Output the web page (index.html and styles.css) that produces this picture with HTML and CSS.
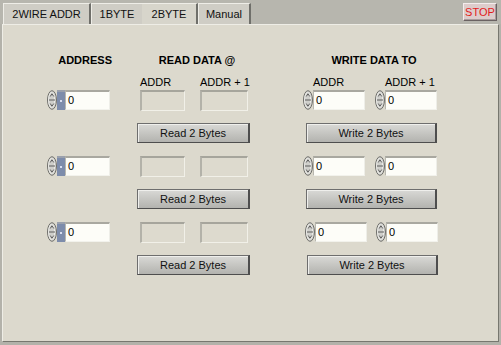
FILE: index.html
```html
<!DOCTYPE html>
<html>
<head>
<meta charset="utf-8">
<link rel="stylesheet" href="styles.css">
</head>
<body>
<div class="window">
  <div class="topbar">
    <div class="tabs">
      <div class="tab tab-wire">2WIRE ADDR</div>
      <div class="tab tab-b1">1BYTE</div>
      <div class="tab tab-b2">2BYTE</div>
      <div class="tab tab-man">Manual</div>
    </div>
    <div class="stop">STOP</div>
  </div>
  <div class="panel">
    <div class="section sec-address">
      <div class="heading">ADDRESS</div>
      <div class="labels"></div>
      <div class="rows">
        <div class="row addr-row">
          <div class="num">
            <svg class="spin" viewBox="0 0 10 20" width="10" height="20"><ellipse cx="5" cy="10" rx="4.5" ry="9.3" fill="#cfcfcb" stroke="#6f6f6b" stroke-width="1"/><ellipse cx="4.6" cy="10" rx="3" ry="7.6" fill="none" stroke="#f4f4f0" stroke-width="0.8"/><path d="M3.2 6.5 L5 3.8 L6.8 6.5 M2 10 H8 M3.2 13.5 L5 16.2 L6.8 13.5" fill="none" stroke="#505050" stroke-width="0.9"/></svg>
            <span class="radix"><span class="radix-dot"></span></span>
            <span class="field">0</span>
          </div>
        </div>
        <div class="row"></div>
        <div class="row addr-row">
          <div class="num">
            <svg class="spin" viewBox="0 0 10 20" width="10" height="20"><ellipse cx="5" cy="10" rx="4.5" ry="9.3" fill="#cfcfcb" stroke="#6f6f6b" stroke-width="1"/><ellipse cx="4.6" cy="10" rx="3" ry="7.6" fill="none" stroke="#f4f4f0" stroke-width="0.8"/><path d="M3.2 6.5 L5 3.8 L6.8 6.5 M2 10 H8 M3.2 13.5 L5 16.2 L6.8 13.5" fill="none" stroke="#505050" stroke-width="0.9"/></svg>
            <span class="radix"><span class="radix-dot"></span></span>
            <span class="field">0</span>
          </div>
        </div>
        <div class="row"></div>
        <div class="row addr-row">
          <div class="num">
            <svg class="spin" viewBox="0 0 10 20" width="10" height="20"><ellipse cx="5" cy="10" rx="4.5" ry="9.3" fill="#cfcfcb" stroke="#6f6f6b" stroke-width="1"/><ellipse cx="4.6" cy="10" rx="3" ry="7.6" fill="none" stroke="#f4f4f0" stroke-width="0.8"/><path d="M3.2 6.5 L5 3.8 L6.8 6.5 M2 10 H8 M3.2 13.5 L5 16.2 L6.8 13.5" fill="none" stroke="#505050" stroke-width="0.9"/></svg>
            <span class="radix"><span class="radix-dot"></span></span>
            <span class="field">0</span>
          </div>
        </div>
      </div>
    </div>

    <div class="section sec-read">
      <div class="heading">READ DATA @</div>
      <div class="labels read-labels">
        <span class="cell-a">ADDR</span>
        <span class="cell-b">ADDR + 1</span>
      </div>
      <div class="rows">
        <div class="row read-row"><span class="ind cell-a"></span><span class="ind cell-b"></span></div>
        <div class="row"><div class="btn btn-read">Read 2 Bytes</div></div>
        <div class="row read-row"><span class="ind cell-a"></span><span class="ind cell-b"></span></div>
        <div class="row"><div class="btn btn-read">Read 2 Bytes</div></div>
        <div class="row read-row"><span class="ind cell-a"></span><span class="ind cell-b"></span></div>
        <div class="row"><div class="btn btn-read">Read 2 Bytes</div></div>
      </div>
    </div>

    <div class="section sec-write">
      <div class="heading">WRITE DATA TO</div>
      <div class="labels write-labels">
        <span class="cell-w">ADDR</span>
        <span class="cell-w">ADDR + 1</span>
      </div>
      <div class="rows">
        <div class="row write-row">
          <div class="num cell-w">
            <svg class="spin" viewBox="0 0 10 20" width="10" height="20"><ellipse cx="5" cy="10" rx="4.5" ry="9.3" fill="#cfcfcb" stroke="#6f6f6b" stroke-width="1"/><ellipse cx="4.6" cy="10" rx="3" ry="7.6" fill="none" stroke="#f4f4f0" stroke-width="0.8"/><path d="M3.2 6.5 L5 3.8 L6.8 6.5 M2 10 H8 M3.2 13.5 L5 16.2 L6.8 13.5" fill="none" stroke="#505050" stroke-width="0.9"/></svg>
            <span class="field">0</span>
          </div>
          <div class="num cell-w">
            <svg class="spin" viewBox="0 0 10 20" width="10" height="20"><ellipse cx="5" cy="10" rx="4.5" ry="9.3" fill="#cfcfcb" stroke="#6f6f6b" stroke-width="1"/><ellipse cx="4.6" cy="10" rx="3" ry="7.6" fill="none" stroke="#f4f4f0" stroke-width="0.8"/><path d="M3.2 6.5 L5 3.8 L6.8 6.5 M2 10 H8 M3.2 13.5 L5 16.2 L6.8 13.5" fill="none" stroke="#505050" stroke-width="0.9"/></svg>
            <span class="field">0</span>
          </div>
        </div>
        <div class="row"><div class="btn btn-write">Write 2 Bytes</div></div>
        <div class="row write-row">
          <div class="num cell-w">
            <svg class="spin" viewBox="0 0 10 20" width="10" height="20"><ellipse cx="5" cy="10" rx="4.5" ry="9.3" fill="#cfcfcb" stroke="#6f6f6b" stroke-width="1"/><ellipse cx="4.6" cy="10" rx="3" ry="7.6" fill="none" stroke="#f4f4f0" stroke-width="0.8"/><path d="M3.2 6.5 L5 3.8 L6.8 6.5 M2 10 H8 M3.2 13.5 L5 16.2 L6.8 13.5" fill="none" stroke="#505050" stroke-width="0.9"/></svg>
            <span class="field">0</span>
          </div>
          <div class="num cell-w">
            <svg class="spin" viewBox="0 0 10 20" width="10" height="20"><ellipse cx="5" cy="10" rx="4.5" ry="9.3" fill="#cfcfcb" stroke="#6f6f6b" stroke-width="1"/><ellipse cx="4.6" cy="10" rx="3" ry="7.6" fill="none" stroke="#f4f4f0" stroke-width="0.8"/><path d="M3.2 6.5 L5 3.8 L6.8 6.5 M2 10 H8 M3.2 13.5 L5 16.2 L6.8 13.5" fill="none" stroke="#505050" stroke-width="0.9"/></svg>
            <span class="field">0</span>
          </div>
        </div>
        <div class="row"><div class="btn btn-write">Write 2 Bytes</div></div>
        <div class="row write-row write-row-last">
          <div class="num cell-w">
            <svg class="spin" viewBox="0 0 10 20" width="10" height="20"><ellipse cx="5" cy="10" rx="4.5" ry="9.3" fill="#cfcfcb" stroke="#6f6f6b" stroke-width="1"/><ellipse cx="4.6" cy="10" rx="3" ry="7.6" fill="none" stroke="#f4f4f0" stroke-width="0.8"/><path d="M3.2 6.5 L5 3.8 L6.8 6.5 M2 10 H8 M3.2 13.5 L5 16.2 L6.8 13.5" fill="none" stroke="#505050" stroke-width="0.9"/></svg>
            <span class="field">0</span>
          </div>
          <div class="num cell-w">
            <svg class="spin" viewBox="0 0 10 20" width="10" height="20"><ellipse cx="5" cy="10" rx="4.5" ry="9.3" fill="#cfcfcb" stroke="#6f6f6b" stroke-width="1"/><ellipse cx="4.6" cy="10" rx="3" ry="7.6" fill="none" stroke="#f4f4f0" stroke-width="0.8"/><path d="M3.2 6.5 L5 3.8 L6.8 6.5 M2 10 H8 M3.2 13.5 L5 16.2 L6.8 13.5" fill="none" stroke="#505050" stroke-width="0.9"/></svg>
            <span class="field">0</span>
          </div>
        </div>
        <div class="row"><div class="btn btn-write btn-write-last">Write 2 Bytes</div></div>
      </div>
    </div>
  </div>
</div>
</body>
</html>
```

FILE: styles.css
```css
* { box-sizing: border-box; }

body {
  margin: 0;
  background: #b3b2aa;
  font-family: "Liberation Sans", Arial, sans-serif;
  font-size: 11px;
  color: #000;
}

.window {
  width: 501px;
  height: 345px;
  display: flex;
  flex-direction: column;
}

.topbar {
  height: 24px;
  flex: none;
  display: flex;
  align-items: flex-end;
  padding-left: 3px;
  background: #b7b6ae;
}

.tabs {
  display: flex;
  height: 21px;
}

.tab {
  height: 21px;
  line-height: 20px;
  text-align: center;
  background: #cfcdc5;
  border-top: 1px solid #eeede7;
  border-left: 1px solid #eeede7;
  border-right: 2px solid #6f6f6a;
  color: #111;
}

.tab-wire { width: 88px; }
.tab-b1 { width: 51px; border-right: none; }
.tab-b2 { width: 56px; border-left: none; background: #d7d5cb; }
.tab-man { width: 53px; }

.stop {
  margin-left: auto;
  margin-right: 4px;
  align-self: flex-start;
  margin-top: 3px;
  width: 34px;
  height: 18px;
  line-height: 16px;
  text-align: center;
  color: #e21b1b;
  background: #ddcccb;
  border-top: 1px solid #f3ecec;
  border-left: 1px solid #f3ecec;
  border-right: 1px solid #6a6262;
  border-bottom: 1px solid #6a6262;
  box-shadow: inset -1px -1px 0 #a99c9c;
}

.panel {
  margin: 0 2px;
  height: 318px;
  flex: none;
  background: #dcd9cd;
  border-top: 1px solid #eeede6;
  border-left: 1px solid #eeede6;
  border-right: 1px solid #77776f;
  border-bottom: 1px solid #77776f;
  display: flex;
  padding-top: 29px;
}

.section {
  display: flex;
  flex-direction: column;
}

.sec-address { margin-left: 42px; width: 67px; }
.sec-read { margin-left: 25px; width: 113px; }
.sec-write { margin-left: 53px; width: 137px; }

.heading {
  height: 13px;
  line-height: 13px;
  font-weight: bold;
  white-space: nowrap;
}

.sec-address .heading { text-align: right; }
.sec-read .heading { text-align: center; padding-left: 7px; }
.sec-write .heading { text-align: center; padding-left: 5px; }

.labels {
  display: flex;
  height: 13px;
  line-height: 13px;
  margin-top: 9px;
  margin-bottom: 1px;
  white-space: nowrap;
}

.read-labels { padding-left: 3px; gap: 15px; }
.write-labels { padding-left: 10px; gap: 10px; }

.rows {
  display: flex;
  flex-direction: column;
  gap: 13px;
}

.row {
  height: 20px;
  display: flex;
}

.cell-a { width: 45px; flex: none; }
.cell-b { width: 48px; flex: none; }
.cell-w { width: 62px; flex: none; }

.read-row { padding-left: 3px; gap: 15px; }
.write-row { gap: 10px; }
.write-row-last { padding-left: 2px; gap: 9px; }

.addr-row { padding-left: 2px; }

.num {
  display: flex;
  height: 20px;
  width: 63px;
}

.write-row .num { width: 62px; }

.spin {
  display: block;
  flex: none;
  width: 10px;
  height: 20px;
}

.radix {
  width: 8px;
  flex: none;
  background: #7d8cab;
  border-top: 2px solid #9aa0ac;
  display: flex;
  align-items: center;
  justify-content: center;
}

.radix-dot {
  width: 2px;
  height: 2px;
  background: #d8def0;
}

.field {
  flex: 1;
  background: #fdfdf8;
  border-top: 2px solid #a9a8a0;
  border-left: 1px solid #b8b7af;
  border-right: 1px solid #eeeee8;
  border-bottom: 1px solid #f2f2ec;
  padding-left: 2px;
  line-height: 16px;
}

.ind {
  height: 21px;
  background: #dddace;
  border-top: 2px solid #a6a59c;
  border-left: 2px solid #b3b2a9;
  border-right: 1px solid #f1f0e8;
  border-bottom: 1px solid #f1f0e8;
}

.btn {
  height: 20px;
  line-height: 18px;
  text-align: center;
  background: linear-gradient(#d9d9d6, #c2c2be 60%, #b3b3af);
  border-top: 1px solid #6e6e6e;
  border-left: 1px solid #6e6e6e;
  border-right: 2px solid #4e4e4e;
  border-bottom: 1px solid #4e4e4e;
  box-shadow: inset 1px 1px 0 #efefec;
  color: #111;
}

.btn-read { width: 113px; }
.btn-write { width: 131px; margin-left: 3px; }
.btn-write-last { margin-left: 4px; }
```
